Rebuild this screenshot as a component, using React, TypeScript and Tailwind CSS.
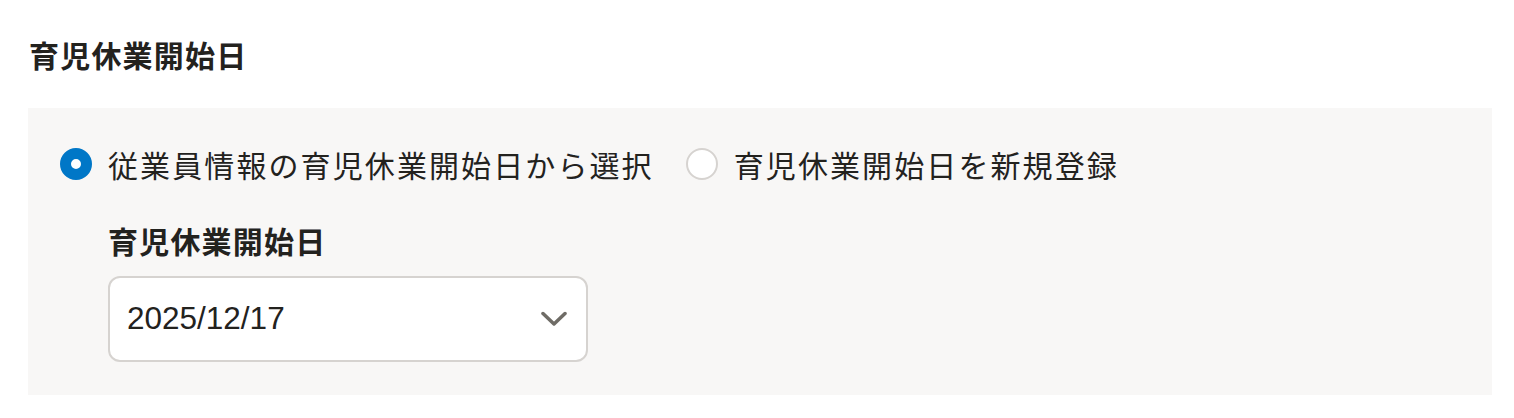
import { useState } from "react";

const jp = "font-['Noto_Sans_CJK_JP','Noto_Sans',sans-serif]";

function Radio({ checked, label, onClick }: { checked: boolean; label: string; onClick: () => void }) {
  return (
    <label className="flex items-center gap-[16px] cursor-pointer" onClick={onClick}>
      <span
        className={`box-border h-[32px] w-[32px] shrink-0 rounded-full ${
          checked ? "border-[11px] border-[#0077c7] bg-white" : "border-2 border-[#d6d3d0] bg-white"
        }`}
      />
      <span className="text-[30px] leading-[48px] tracking-[2.1px] text-[#23221e]">{label}</span>
    </label>
  );
}

export default function App() {
  const [mode, setMode] = useState<"existing" | "new">("existing");

  return (
    <div className={`${jp} bg-white pt-[33px] pl-[28px] pr-[22px] min-h-[418px]`}>
      <h2 className="text-[30px] font-bold leading-[42px] tracking-[1.2px] text-[#23221e] pl-[1px]">育児休業開始日</h2>

      <div className="mt-[33px] bg-[#f8f7f6] pl-[32px] pt-[32px] pb-[33px]">
        <div className="flex items-center gap-[32px]">
          <Radio checked={mode === "existing"} label="従業員情報の育児休業開始日から選択" onClick={() => setMode("existing")} />
          <Radio checked={mode === "new"} label="育児休業開始日を新規登録" onClick={() => setMode("new")} />
        </div>

        <div className="pl-[48px]">
          <div className="mt-[31px] text-[30px] font-bold leading-[42px] tracking-[1.2px] text-[#23221e]">育児休業開始日</div>
          <div className="mt-[15px] box-border flex h-[86px] w-[480px] items-center justify-between rounded-[12px] border-2 border-[#d6d3d0] bg-white pl-[17px] pr-[19px]">
            <span className="font-['Liberation_Sans',Arial,sans-serif] text-[31.5px] text-[#23221e]">2025/12/17</span>
            <svg width="26" height="16" viewBox="0 0 26 16" fill="none">
              <path d="M2 2.5 L13 13 L24 2.5" stroke="#6f6c66" strokeWidth="3.5" strokeLinecap="round" strokeLinejoin="round" />
            </svg>
          </div>
        </div>
      </div>
    </div>
  );
}
